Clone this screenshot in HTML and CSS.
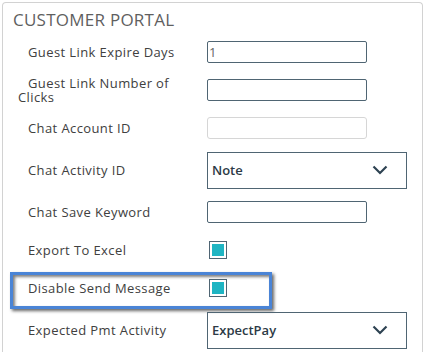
FILE: index.html
```html
<!DOCTYPE html>
<html lang="en">
<head>
    <meta charset="UTF-8">
    <title>Customer Portal</title>
    <link rel="stylesheet" href="styles.css">
</head>
<body>
    <div class="panel">
        <h2 class="panel-title">CUSTOMER PORTAL</h2>

        <div class="form-row">
            <label class="field-label">Guest Link Expire Days</label>
            <input class="text-input" type="text" value="1">
        </div>
        <div class="form-row">
            <label class="field-label">Guest Link Number of Clicks</label>
            <input class="text-input" type="text">
        </div>
        <div class="form-row">
            <label class="field-label">Chat Account ID</label>
            <input class="text-input" type="text" disabled>
        </div>
        <div class="form-row form-row-tall">
            <label class="field-label">Chat Activity ID</label>
            <div class="select-box">
                <span>Note</span>
                <svg class="chevron" width="16" height="10" viewBox="0 0 16 10"><path d="M1.5 1.5 L8 8 L14.5 1.5" fill="none" stroke="#2e4352" stroke-width="2.2"/></svg>
            </div>
        </div>
        <div class="form-row">
            <label class="field-label">Chat Save Keyword</label>
            <input class="text-input" type="text">
        </div>
        <div class="form-row">
            <label class="field-label">Export To Excel</label>
            <span class="check-box"></span>
        </div>
        <div class="form-row">
            <label class="field-label">Disable Send Message</label>
            <span class="check-box"></span>
            <div class="highlight"></div>
        </div>
        <div class="form-row form-row-tall">
            <label class="field-label">Expected Pmt Activity</label>
            <div class="select-box">
                <span>ExpectPay</span>
                <svg class="chevron" width="16" height="10" viewBox="0 0 16 10"><path d="M1.5 1.5 L8 8 L14.5 1.5" fill="none" stroke="#2e4352" stroke-width="2.2"/></svg>
            </div>
        </div>
    </div>
</body>
</html>
```

FILE: styles.css
```css
* {
    margin: 0;
    padding: 0;
    box-sizing: border-box;
}

body {
    background: #fff;
    font-family: 'Open Sans', 'Noto Sans', sans-serif;
    color: #3b3b3b;
    overflow: hidden;
}

.panel {
    margin: 2px 0 0 2px;
    width: 421px;
    height: 400px;
    border: 1px solid #d2d2d2;
    border-bottom: none;
    border-radius: 4px 4px 0 0;
    padding-left: 15px;
}

.panel-title {
    font-size: 17px;
    font-weight: 400;
    color: #5f5f5f;
    letter-spacing: 0.25px;
    height: 30px;
    padding-top: 7px;
    margin-left: -5px;
    line-height: 20px;
}

.form-row {
    position: relative;
    display: flex;
    align-items: center;
    height: 38px;
}

.form-row-tall {
    height: 46px;
}

.field-label {
    width: 189px;
    padding-right: 17px;
    font-size: 13px;
    line-height: 14px;
    letter-spacing: 0.4px;
    text-indent: 10px;
    color: #404040;
}

.text-input {
    width: 160px;
    height: 22px;
    border: 1px solid #4f6573;
    border-radius: 2px;
    font-family: inherit;
    font-size: 13px;
    color: #666;
    padding: 0 1px;
    outline: none;
}

.text-input:disabled {
    background: #fff;
    border-color: #d6d6d6;
    border-radius: 3px;
}

.select-box {
    width: 200px;
    height: 37px;
    border: 1px solid #4f6573;
    display: flex;
    align-items: center;
    justify-content: space-between;
    padding: 0 18px 0 4px;
    font-size: 13px;
    font-weight: 600;
    color: #2c3a46;
}

.chevron {
    display: block;
}

.check-box {
    display: block;
    width: 18px;
    height: 18px;
    margin-left: 2px;
    border: 1px solid #4f6573;
    padding: 2px;
    background: #1fb5c3;
    background-clip: content-box;
}

.highlight {
    position: absolute;
    left: -8px;
    top: 3px;
    width: 262px;
    height: 37px;
    border: 3px solid #4a84d6;
    box-shadow: 2px 2px 3px rgba(0, 0, 0, 0.6), inset 2px 2px 3px rgba(0, 0, 0, 0.5);
    pointer-events: none;
}
```
